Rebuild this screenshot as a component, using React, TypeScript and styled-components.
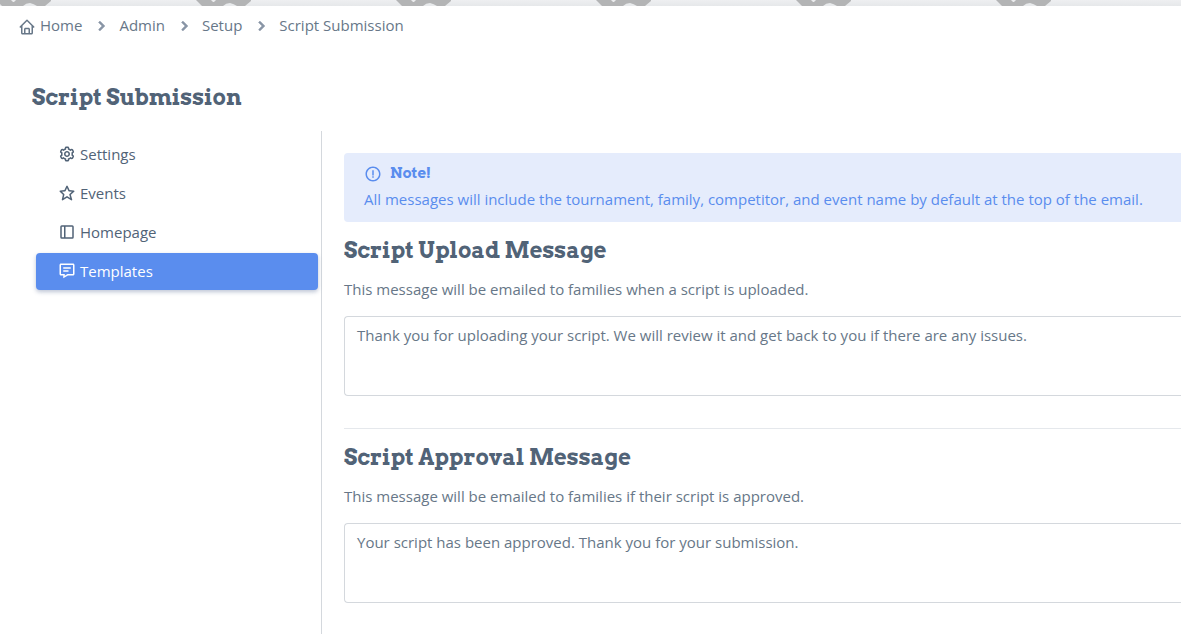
import React from "react";
import styled, { createGlobalStyle } from "styled-components";
import {
  BiHome,
  BiChevronRight,
  BiCog,
  BiStar,
  BiDockLeft,
  BiMessageDetail,
  BiErrorCircle,
} from "react-icons/bi";

const slab = '"Arvo", "DejaVu Serif", serif';

const GlobalStyle = createGlobalStyle`
  *, *::before, *::after { box-sizing: border-box; }
  body {
    margin: 0;
    background: #fff;
    color: #677788;
    font-family: "Open Sans", sans-serif;
    font-size: 15px;
    line-height: 23px;
    overflow-x: hidden;
  }
`;

const Page = styled.div`
  display: flex;
  flex-direction: column;
  min-height: 100vh;
`;

const Banner = styled.svg`
  display: block;
  width: 100%;
  height: 6px;
`;

const Breadcrumb = styled.nav`
  padding: 8px 18px;
`;

const Crumbs = styled.ol`
  display: flex;
  align-items: center;
  margin: 0;
  padding: 0;
  list-style: none;
`;

const Crumb = styled.li`
  display: flex;
  align-items: center;
`;

const CrumbLink = styled.a`
  display: flex;
  align-items: center;
  gap: 4px;
  color: inherit;
  text-decoration: none;

  svg {
    margin-top: 2px;
  }
`;

const Separator = styled(BiChevronRight)`
  margin: 0 8px 0 9px;
  color: #8592a3;
  stroke: currentColor;
  stroke-width: 1;
`;

const PageTitle = styled.h1`
  margin: 0;
  padding: 38px 32px 20px;
  color: #516377;
  font: bold 22px/28px ${slab};
`;

const Columns = styled.div`
  display: flex;
  flex: 1;
`;

const Sidebar = styled.nav`
  display: flex;
  flex: 0 0 322px;
  flex-direction: column;
  gap: 2px;
  padding: 5px 3px 0 36px;
  border-right: 1px solid #d4d8dd;
`;

const NavItem = styled.a<{ $active?: boolean }>`
  display: flex;
  align-items: center;
  gap: 4px;
  height: 37px;
  padding: 0 22px;
  border-radius: 4px;
  color: ${(p) => (p.$active ? "#fff" : "#516377")};
  background: ${(p) => (p.$active ? "#5a8dee" : "transparent")};
  box-shadow: ${(p) => (p.$active ? "0 2px 4px rgba(90, 110, 150, 0.4)" : "none")};
  text-decoration: none;

  svg {
    margin-bottom: 2px;
  }
`;

const Content = styled.main`
  flex: 1;
  min-width: 0;
  padding: 22px 0 32px 22px;
`;

const Note = styled.aside`
  padding: 8px 20px 11px;
  border-radius: 4px 0 0 4px;
  background: #e5ecfc;
  color: #5a8dee;
`;

const NoteTitle = styled.h2`
  display: flex;
  align-items: center;
  gap: 8px;
  margin: 0 0 3px;
  font: bold 15px/24px ${slab};

  svg {
    margin-top: 2px;
  }
`;

const NoteText = styled.p`
  margin: 0;
`;

const Section = styled.section`
  padding-top: 14px;

  & + & {
    margin-top: 32px;
    border-top: 1px solid #e5e8ec;
  }
`;

const SectionTitle = styled.h2`
  margin: 0 0 14px;
  color: #516377;
  font: bold 22px/28px ${slab};
`;

const Label = styled.label`
  display: block;
  margin-bottom: 15px;
`;

const Message = styled.textarea`
  display: block;
  width: 100%;
  height: 80px;
  padding: 7px 12px;
  border: 1px solid #d4d8dd;
  border-right: 0;
  border-radius: 4px 0 0 4px;
  background: #fff;
  color: inherit;
  font: inherit;
  resize: none;
  outline: none;
`;

const navItems = [
  { label: "Settings", Icon: BiCog },
  { label: "Events", Icon: BiStar },
  { label: "Homepage", Icon: BiDockLeft },
  { label: "Templates", Icon: BiMessageDetail, active: true },
];

const templates = [
  {
    id: "upload",
    title: "Script Upload Message",
    hint: "This message will be emailed to families when a script is uploaded.",
    text: "Thank you for uploading your script. We will review it and get back to you if there are any issues.",
  },
  {
    id: "approval",
    title: "Script Approval Message",
    hint: "This message will be emailed to families if their script is approved.",
    text: "Your script has been approved. Thank you for your submission.",
  },
];

export default function App() {
  return (
    <>
      <GlobalStyle />
      <Page>
        <Banner aria-hidden="true">
          <defs>
            <linearGradient id="band" x1="0" y1="0" x2="0" y2="1">
              <stop offset="0" stopColor="#eeeff1" />
              <stop offset="1" stopColor="#e6e8ea" />
            </linearGradient>
            <pattern id="badges" x="-4" width="200" height="6" patternUnits="userSpaceOnUse">
              <path d="M0 0H55V1L49 6H6Z" fill="#b3b4b5" />
              <path d="M15 0H20L18 2H17Z" fill="#ebecee" />
              <path d="M27 6Q30 3 34 3Q38 4 41 6Z" fill="#e8eaec" />
            </pattern>
          </defs>
          <rect width="100%" height="6" fill="url(#band)" />
          <rect width="100%" height="6" fill="url(#badges)" />
        </Banner>
        <Breadcrumb aria-label="Breadcrumb">
          <Crumbs>
            {["Home", "Admin", "Setup", "Script Submission"].map((name, i) => (
              <Crumb key={name}>
                {i > 0 && <Separator size={20} />}
                <CrumbLink href="#">
                  {i === 0 && <BiHome size={18} />}
                  {name}
                </CrumbLink>
              </Crumb>
            ))}
          </Crumbs>
        </Breadcrumb>
        <PageTitle>Script Submission</PageTitle>
        <Columns>
          <Sidebar aria-label="Script submission">
            {navItems.map(({ label, Icon, active }) => (
              <NavItem key={label} href="#" $active={active} aria-current={active ? "page" : undefined}>
                <Icon size={18} />
                {label}
              </NavItem>
            ))}
          </Sidebar>
          <Content>
            <Note>
              <NoteTitle>
                <BiErrorCircle size={18} />
                Note!
              </NoteTitle>
              <NoteText>
                All messages will include the tournament, family, competitor, and event name by default at the top of
                the email.
              </NoteText>
            </Note>
            {templates.map((t) => (
              <Section key={t.id}>
                <SectionTitle>{t.title}</SectionTitle>
                <Label htmlFor={t.id}>{t.hint}</Label>
                <Message id={t.id} defaultValue={t.text} />
              </Section>
            ))}
          </Content>
        </Columns>
      </Page>
    </>
  );
}
